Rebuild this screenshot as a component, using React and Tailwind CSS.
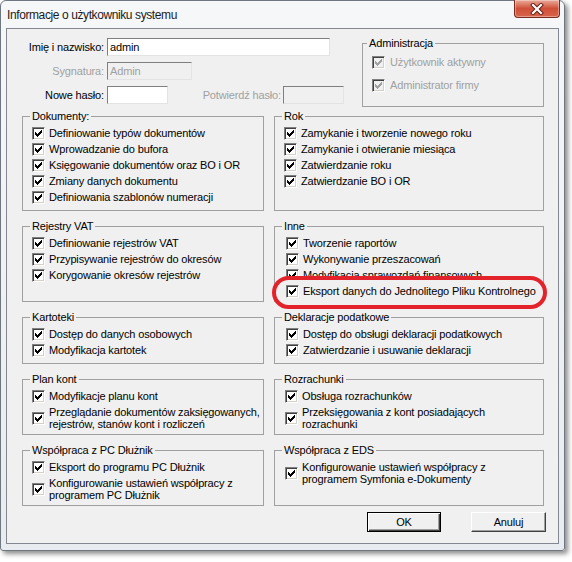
import React from 'react';

const Check = ({ disabled }) => (
    <span
        className={`flex h-[13px] w-[13px] shrink-0 border border-t-[#808080] border-l-[#808080] border-r-white border-b-white shadow-[inset_1px_1px_0_#404040,inset_-1px_-1px_0_#d4d0c8] ${
            disabled ? 'bg-[#f0f0f0]' : 'bg-white'
        }`}
    >
        <svg width="11" height="11" viewBox="0 0 11 11" shapeRendering="crispEdges">
            <g fill={disabled ? '#a0a0a0' : '#000'}>
                <rect x="2" y="4" width="1" height="3" />
                <rect x="3" y="5" width="1" height="3" />
                <rect x="4" y="6" width="1" height="3" />
                <rect x="5" y="5" width="1" height="3" />
                <rect x="6" y="4" width="1" height="3" />
                <rect x="7" y="3" width="1" height="3" />
                <rect x="8" y="2" width="1" height="3" />
            </g>
        </svg>
    </span>
);

const Item = ({ children, twoLine, className = '' }) => (
    <div className={`flex min-h-[16px] items-center gap-[4px] ${className}`}>
        <Check />
        <span className={`whitespace-nowrap ${twoLine ? 'py-[2px] leading-[12px]' : 'leading-[16px]'}`}>{children}</span>
    </div>
);

const Group = ({ title, children, pad = 'pl-[9px]' }) => (
    <div className={`relative border border-[#a0a0a0] pt-[8px] ${pad}`}>
        <span className="absolute -top-[8px] left-[7px] whitespace-nowrap bg-[#f0f0f0] px-[2px] leading-[14px]">{title}</span>
        <div className="flex flex-col">{children}</div>
    </div>
);

const Input = ({ width, value, disabled }) => (
    <div
        className={`flex h-[18px] items-center border border-t-[#7f7f7f] border-l-[#7f7f7f] border-r-[#e3e3e3] border-b-[#e3e3e3] px-[2px] ${width} ${
            disabled ? 'bg-[#f0f0f0] text-[#a0a0a0]' : 'bg-white'
        }`}
    >
        {value}
    </div>
);

const App = () => {
    return (
        <div className="h-[562px] w-[572px] bg-white font-['Liberation_Sans',Arial,sans-serif] text-[11px] tracking-[-0.15px] text-black">
            <div className="relative flex h-[551px] w-[565px] flex-col rounded-t-[6px] rounded-b-[3px] border border-[#6e7680] bg-gradient-to-b from-[#f6f7f9] to-[#e8ebef] shadow-[3px_3px_5px_rgba(0,0,0,0.45)]">
                <div className="flex h-[27px] items-center pl-[6px] text-[12px] tracking-[-0.4px] text-[#1b1b1b]">
                    Informacje o użytkowniku systemu
                </div>

                <div className="absolute -top-px right-[4px] flex h-[18px] w-[46px] items-center justify-center rounded-b-[4px] border border-t-0 border-[#7a2a1e] bg-gradient-to-b from-[#e9a999] via-[#cf4f38] to-[#d9654b] shadow-[inset_0_0_0_1px_rgba(255,255,255,0.35)]">
                    <svg width="14" height="12" viewBox="0 0 14 12">
                        <path d="M3 2 L11 10 M11 2 L3 10" stroke="#5a1b12" strokeWidth="4" strokeLinecap="square" />
                        <path d="M3 2 L11 10 M11 2 L3 10" stroke="#fff" strokeWidth="2.2" strokeLinecap="square" />
                    </svg>
                </div>

                <div className="relative ml-[5px] flex h-[516px] w-[553px] flex-col border border-[#828790] bg-[#f0f0f0] pl-[15px] pr-[14px]">
                    <div className="flex items-start">
                        <div className="mt-[9px] flex flex-col gap-[6px]">
                            <div className="flex items-center">
                                <span className="w-[85px] pr-[3px] text-right">Imię i nazwisko:</span>
                                <Input width="w-[223px]" value="admin" />
                            </div>
                            <div className="flex items-center">
                                <span className="w-[85px] pr-[3px] text-right text-[#a0a0a0]">Sygnatura:</span>
                                <Input width="w-[85px]" value="Admin" disabled />
                            </div>
                            <div className="flex items-center">
                                <span className="w-[85px] pr-[3px] text-right">Nowe hasło:</span>
                                <Input width="w-[61px]" value="" />
                                <span className="w-[115px] pr-[2px] text-right text-[#a0a0a0]">Potwierdź hasło:</span>
                                <Input width="w-[61px]" value="" disabled />
                            </div>
                        </div>

                        <div className="relative ml-auto mt-[14px] h-[64px] w-[182px] border border-[#a0a0a0] pl-[9px] pt-[10px] text-[#a0a0a0]">
                            <span className="absolute -top-[8px] left-[4px] bg-[#f0f0f0] px-[2px] leading-[14px] text-black">
                                Administracja
                            </span>
                            <div className="flex flex-col gap-[7px]">
                                <div className="flex h-[16px] items-center gap-[5px]">
                                    <Check disabled />
                                    <span>Użytkownik aktywny</span>
                                </div>
                                <div className="flex h-[16px] items-center gap-[5px]">
                                    <Check disabled />
                                    <span>Administrator firmy</span>
                                </div>
                            </div>
                        </div>
                    </div>

                    <div className="mt-[9px] grid grid-cols-[242px_270px] grid-rows-[95px_76px_47px_56px_56px] gap-x-[10px] gap-y-[15px]">
                        <Group title="Dokumenty:">
                            <Item>Definiowanie typów dokumentów</Item>
                            <Item>Wprowadzanie do bufora</Item>
                            <Item>Księgowanie dokumentów oraz BO i OR</Item>
                            <Item>Zmiany danych dokumentu</Item>
                            <Item>Definiowania szablonów numeracji</Item>
                        </Group>
                        <Group title="Rok" pad="pl-[9px]">
                            <Item>Zamykanie i tworzenie nowego roku</Item>
                            <Item>Zamykanie i otwieranie miesiąca</Item>
                            <Item>Zatwierdzanie roku</Item>
                            <Item>Zatwierdzanie BO i OR</Item>
                        </Group>

                        <Group title="Rejestry VAT">
                            <Item>Definiowanie rejestrów VAT</Item>
                            <Item>Przypisywanie rejestrów do okresów</Item>
                            <Item>Korygowanie okresów rejestrów</Item>
                        </Group>
                        <Group title="Inne" pad="pl-[11px]">
                            <Item>Tworzenie raportów</Item>
                            <Item>Wykonywanie przeszacowań</Item>
                            <Item>Modyfikacja sprawozdań finansowych</Item>
                            <Item className="relative z-10">Eksport danych do Jednolitego Pliku Kontrolnego</Item>
                        </Group>

                        <Group title="Kartoteki">
                            <Item>Dostęp do danych osobowych</Item>
                            <Item>Modyfikacja kartotek</Item>
                        </Group>
                        <Group title="Deklaracje podatkowe" pad="pl-[11px]">
                            <Item>Dostęp do obsługi deklaracji podatkowych</Item>
                            <Item>Zatwierdzanie i usuwanie deklaracji</Item>
                        </Group>

                        <Group title="Plan kont">
                            <Item>Modyfikacje planu kont</Item>
                            <Item twoLine>
                                Przeglądanie dokumentów zaksięgowanych,
                                <br />
                                rejestrów, stanów kont i rozliczeń
                            </Item>
                        </Group>
                        <Group title="Rozrachunki" pad="pl-[10px]">
                            <Item>Obsługa rozrachunków</Item>
                            <Item twoLine>
                                Przeksięgowania z kont posiadających
                                <br />
                                rozrachunki
                            </Item>
                        </Group>

                        <Group title="Współpraca z PC Dłużnik">
                            <Item>Eksport do programu PC Dłużnik</Item>
                            <Item twoLine>
                                Konfigurowanie ustawień współpracy z
                                <br />
                                programem PC Dłużnik
                            </Item>
                        </Group>
                        <Group title="Współpraca z EDS" pad="pl-[10px]">
                            <Item twoLine>
                                Konfigurowanie ustawień współpracy z
                                <br />
                                programem Symfonia e-Dokumenty
                            </Item>
                        </Group>
                    </div>

                    <div className="-mr-[2px] mt-[6px] flex justify-end gap-[30px]">
                        <button className="flex h-[20px] w-[74px] items-center justify-center border border-black bg-[#f0f0f0] shadow-[inset_1px_1px_0_#fff,inset_-1px_-1px_0_#404040,inset_-2px_-2px_0_#a0a0a0]">
                            OK
                        </button>
                        <button className="flex h-[20px] w-[75px] items-center justify-center border border-t-white border-l-white border-r-[#404040] border-b-[#404040] bg-[#f0f0f0] shadow-[inset_-1px_-1px_0_#a0a0a0]">
                            Anuluj
                        </button>
                    </div>

                    <div className="absolute left-[265px] top-[247px] z-[5] h-[33px] w-[275px] rounded-[18px] border-[4px] border-[#e3232b] bg-[#f0f0f0]" />
                </div>
            </div>
        </div>
    );
};

export default App;
